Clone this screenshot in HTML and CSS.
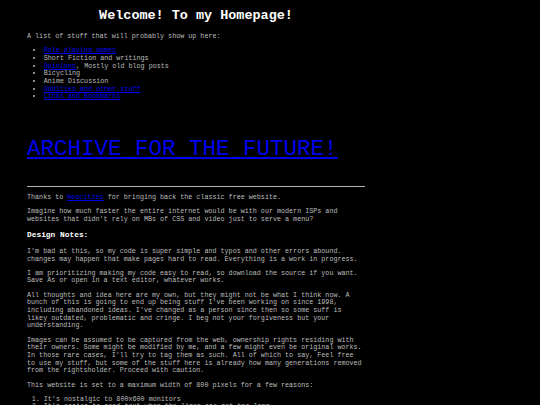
FILE: index.html
```html
<!DOCTYPE html>
<html>
<head>
<meta charset="utf-8">
<title>Welcome! To my Homepage!</title>
<link rel="stylesheet" href="styles.css">
</head>
<body>
<div class="page">
  <h1 class="title">Welcome! To my Homepage!</h1>
  <p>A list of stuff that will probably show up here:</p>
  <ul class="stuff">
    <li><a href="#">Role playing games</a></li>
    <li>Short Fiction and writings</li>
    <li><a href="#">Opinions</a>, Mostly old blog posts</li>
    <li>Bicycling</li>
    <li>Anime Discussion</li>
    <li><a href="#">Oddities and other stuff</a></li>
    <li><a href="#">Links and Bookmarks</a></li>
  </ul>
  <p class="archive"><a href="#">ARCHIVE FOR THE FUTURE!</a></p>
  <hr class="rule">
  <p>Thanks to <a href="#">Neocities</a> for bringing back the classic free website.</p>
  <p>Imagine how much faster the entire internet would be with our modern ISPs and websites that didn't rely on MBs of CSS and video just to serve a menu?</p>
  <h3 class="notes">Design Notes:</h3>
  <p>I'm bad at this, so my code is super simple and typos and other errors abound. changes may happen that make pages hard to read. Everything is a work in progress.</p>
  <p>I am prioritizing making my code easy to read, so download the source if you want. Save As or open in a text editor, whatever works.</p>
  <p>All thoughts and idea here are my own, but they might not be what I think now. A bunch of this is going to end up being stuff I've been working on since 1998, including abandoned ideas. I've changed as a person since then so some suff is likey outdated, problematic and cringe. I beg not your forgiveness but your understanding.</p>
  <p>Images can be assumed to be captured from the web, ownership rights residing with their owners. Some might be modified by me, and a few might even be original works. In those rare cases, I'll try to tag them as such. All of which to say, Feel free to use my stuff, but some of the stuff here is already how many generations removed from the rightsholder. Proceed with caution.</p>
  <p>This website is set to a maximum width of 800 pixels for a few reasons:</p>
  <ol class="reasons">
    <li>It's nostalgic to 800x600 monitors</li>
    <li>It's easier to read text when the lines are not too long</li>
  </ol>
</div>
</body>
</html>
```

FILE: styles.css
```css
html, body {
  margin: 0;
  padding: 0;
  background: #000000;
}

body {
  color: #bcbcbc;
  font-family: "Liberation Mono", "Courier New", monospace;
  font-size: 6.73px;
  line-height: 7.63px;
}

.page {
  margin-left: 27px;
  width: 338px;
}

p {
  margin: 6.73px 0;
}

a {
  color: #0000ee;
}

.title {
  color: #ffffff;
  font-size: 13.46px;
  line-height: 15.25px;
  font-weight: bold;
  text-align: center;
  margin: 8.4px 0 9.4px;
}

.stuff,
.reasons {
  margin: 6.73px 0;
  padding-left: 16.8px;
}

.archive {
  font-size: 22.5px;
  line-height: 25.5px;
  margin: 36.4px 0 23.3px;
}

.rule {
  border: 0;
  border-top: 1px solid #b4b4b4;
  height: 0;
  margin: 0;
}

.notes {
  color: #ffffff;
  font-size: 7.87px;
  line-height: 8.92px;
  font-weight: bold;
  margin: 7.87px 0;
}
```
